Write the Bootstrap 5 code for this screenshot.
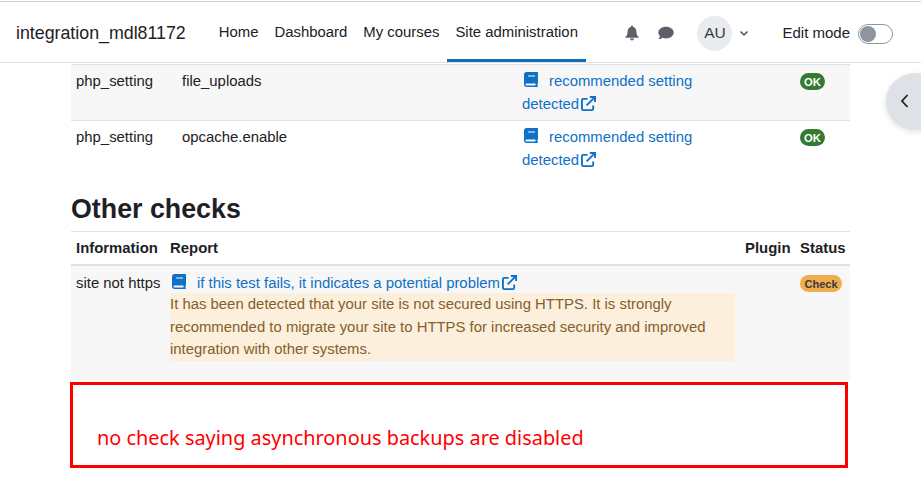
<!DOCTYPE html>
<html lang="en">
<head>
<meta charset="utf-8">
<title>Checks</title>
<link href="https://cdn.jsdelivr.net/npm/bootstrap@5.3.0/dist/css/bootstrap.min.css" rel="stylesheet">
<style>
html,body{height:478px;overflow:hidden;background:#fff}
body{font-family:"Liberation Sans",Arial,sans-serif;font-size:15px;line-height:22.5px;color:#1d2125;position:relative}
.topbar{height:62px;margin-top:1px;border-top:1px solid #d0d0d0;border-bottom:1px solid #dee2e6;padding:0 28px 0 16px;background:#fff}
.brandname{font-size:17.8px;color:#1d2125;margin-right:25px;line-height:28px;position:relative;top:1px}
.menuitem{color:#1d2125;padding:3px 8px 0;height:60px;display:flex;align-items:center;text-decoration:none;border-bottom:3px solid transparent;font-size:14.9px}
.menuitem.here{border-bottom-color:#0f6cbf}
.rightgroup{padding-top:2px}
.iconbtn{color:#5c6167;display:flex}
.avatar{width:35px;height:35px;border-radius:50%;background:#e9ecef;color:#343a40;font-size:15.5px}
.editlabel{color:#1d2125}
.togglebox{width:35px;height:20px;border:1px solid #8f959e;border-radius:10px;padding:1px;background:#fff;margin-top:2px}
.toggleknob{width:16px;height:16px;border-radius:50%;background:#8f959e}
.pagebody{padding:1px 0 0 71px;width:850px}
.chktable{border-collapse:collapse;table-layout:fixed;width:779px;margin:0;font-size:14.9px}
.chktable td,.chktable th{padding:5px;vertical-align:top}
.chktable tr.shade td{background:#f7f7f7}
.t1 td{border-top:1px solid #dee2e6;height:56px}
.heading2{font-size:26.8px;font-weight:700;line-height:32px;margin:16px 0 6px;color:#1d2125}
.chktable.t2 th{border-top:1px solid #dee2e6;border-bottom:2px solid #dee2e6;height:34px;font-weight:700;padding:5px 5px 4px;font-size:14.9px}
.t2 td{height:116px;padding-top:6px}
.oneline{white-space:nowrap}
.doclink{color:#1070c6;text-decoration:none}
.bookic{display:inline-block;vertical-align:-1px;margin:0 11px 0 2px}
.extic{display:inline-block;vertical-align:-2px;margin-left:2px}
.okpill,.checkpill{display:inline-block;border-radius:9px;font-weight:700;line-height:12px;vertical-align:top}
.okpill{background:#357a32;color:#fff;padding:2.5px 4px;margin-top:3px;font-size:11.25px}
.checkpill{background:#f0ad4e;color:#343a40;padding:2.5px 4.5px;margin-top:3px;font-size:11px}
.warnbox{background:#fcefdc;color:#835f2e;width:565px;margin-top:-1.5px;padding-bottom:.5px}
.notebox{border:3px solid #f00;margin:1px 0 0 -1px;width:778px;height:86px;padding:39px 0 0 24px;color:#f00;font-family:"Noto Sans",sans-serif;font-size:19.9px;line-height:28px}
.drawerbtn{position:absolute;left:886px;top:73px;width:60px;height:57px;border-radius:50%;background:#dee2e6;box-shadow:0 2px 6px rgba(0,0,0,.12)}
.drawerbtn svg{position:absolute;left:14px;top:21px}
</style>
</head>
<body>
<nav class="topbar d-flex align-items-center">
  <span class="brandname">integration_mdl81172</span>
  <a class="menuitem" href="#">Home</a>
  <a class="menuitem" href="#">Dashboard</a>
  <a class="menuitem" href="#">My courses</a>
  <a class="menuitem here" href="#">Site administration</a>
  <div class="rightgroup ms-auto d-flex align-items-center">
    <span class="iconbtn" style="margin-right:19px"><svg width="14" height="16" viewBox="0 0 14 16"><path fill="currentColor" d="M7 0.5c-.6 0-1 .4-1 1v.6C3.800 2.600 2.600 4.400 2.600 6.500c0 3-1 4.300-2 5.300-.4.400-.1 1 .4 1h12c.5 0 .8-.6.400-1-1-1-2-2.300-2-5.300 0-2.100-1.200-3.900-3.400-4.400v-.6c0-.6-.4-1-1-1zM5 13.600c0 1.100.9 2 2 2s2-.9 2-2z"/></svg></span>
    <span class="iconbtn" style="margin-right:23px"><svg width="16" height="14" viewBox="0 0 16 14"><path fill="currentColor" d="M8 .7C3.700.7.300 3.300.300 6.500c0 1.400.6 2.600 1.700 3.600-.3 1.300-1.200 2.400-1.500 3 1.700 0 3.200-.6 4.200-1.300 1 .4 2.100.6 3.300.6 4.300 0 7.700-2.600 7.700-5.900S12.300.7 8 .7z"/></svg></span>
    <span class="avatar d-flex align-items-center justify-content-center">AU</span>
    <svg width="10" height="7" viewBox="0 0 10 7" style="margin:0 33px 0 7px"><path d="M1.500 1.500L5 5l3.500-3.500" fill="none" stroke="#343a40" stroke-width="1.200"/></svg>
    <span class="editlabel me-2">Edit mode</span>
    <span class="togglebox d-block"><span class="toggleknob d-block"></span></span>
  </div>
</nav>
<main class="pagebody">
  <table class="chktable t1">
    <colgroup><col style="width:106px"><col style="width:340px"><col style="width:182px"><col style="width:96px"><col style="width:55px"></colgroup>
    <tr class="shade">
      <td>php_setting</td><td>file_uploads</td>
      <td><a class="doclink" href="#"><svg class="bookic" width="14" height="15" viewBox="0 0 14 15"><path fill="currentColor" d="M2.500 0H13c.6 0 1 .4 1 1v10c0 .4-.2.700-.5.800v1.900c.3.200.5.500.5.800 0 .3-.3.500-.6.500H2.500C1.100 15 0 13.900 0 12.500v-10C0 1.100 1.100 0 2.500 0zM4 3.500v1h7v-1zM2.500 11.500c-.6 0-1 .4-1 1s.4 1 1 1h9v-2z"/></svg>recommended setting detected<svg class="extic" width="15" height="15" viewBox="0 0 16 16"><path fill="none" stroke="currentColor" stroke-width="2" d="M7 3H2.500C1.700 3 1 3.700 1 4.500v9c0 .8.700 1.500 1.500 1.500h9c.8 0 1.500-.7 1.500-1.500V10M6 10L14 2M9.500 1H15v5.500"/></svg></a></td>
      <td></td>
      <td><span class="okpill">OK</span></td>
    </tr>
    <tr>
      <td>php_setting</td><td>opcache.enable</td>
      <td><a class="doclink" href="#"><svg class="bookic" width="14" height="15" viewBox="0 0 14 15"><path fill="currentColor" d="M2.500 0H13c.6 0 1 .4 1 1v10c0 .4-.2.700-.5.800v1.900c.3.200.5.500.5.800 0 .3-.3.500-.6.500H2.500C1.100 15 0 13.900 0 12.500v-10C0 1.100 1.100 0 2.500 0zM4 3.500v1h7v-1zM2.500 11.500c-.6 0-1 .4-1 1s.4 1 1 1h9v-2z"/></svg>recommended setting detected<svg class="extic" width="15" height="15" viewBox="0 0 16 16"><path fill="none" stroke="currentColor" stroke-width="2" d="M7 3H2.500C1.700 3 1 3.700 1 4.500v9c0 .8.700 1.500 1.500 1.500h9c.8 0 1.500-.7 1.500-1.500V10M6 10L14 2M9.500 1H15v5.500"/></svg></a></td>
      <td></td>
      <td><span class="okpill">OK</span></td>
    </tr>
  </table>
  <h2 class="heading2">Other checks</h2>
  <table class="chktable t2">
    <colgroup><col style="width:94px"><col style="width:575px"><col style="width:55px"><col style="width:55px"></colgroup>
    <tr><th>Information</th><th>Report</th><th>Plugin</th><th>Status</th></tr>
    <tr class="shade">
      <td class="oneline">site not https</td>
      <td><a class="doclink" href="#"><svg class="bookic" width="14" height="15" viewBox="0 0 14 15"><path fill="currentColor" d="M2.500 0H13c.6 0 1 .4 1 1v10c0 .4-.2.700-.5.800v1.900c.3.200.5.500.5.800 0 .3-.3.500-.6.500H2.500C1.100 15 0 13.900 0 12.500v-10C0 1.100 1.100 0 2.500 0zM4 3.500v1h7v-1zM2.500 11.500c-.6 0-1 .4-1 1s.4 1 1 1h9v-2z"/></svg>if this test fails, it indicates a potential problem<svg class="extic" width="15" height="15" viewBox="0 0 16 16"><path fill="none" stroke="currentColor" stroke-width="2" d="M7 3H2.500C1.700 3 1 3.700 1 4.500v9c0 .8.700 1.500 1.500 1.500h9c.8 0 1.500-.7 1.500-1.500V10M6 10L14 2M9.500 1H15v5.500"/></svg></a>
        <div class="warnbox">It has been detected that your site is not secured using HTTPS. It is strongly recommended to migrate your site to HTTPS for increased security and improved integration with other systems.</div></td>
      <td></td>
      <td><span class="checkpill">Check</span></td>
    </tr>
  </table>
  <div class="notebox">no check saying asynchronous backups are disabled</div>
</main>
<div class="drawerbtn"><svg width="10" height="14" viewBox="0 0 10 14"><path d="M7.500 1L2 7l5.500 6" fill="none" stroke="#1d2125" stroke-width="1.800"/></svg></div>
<script src="https://cdn.jsdelivr.net/npm/bootstrap@5.3.0/dist/js/bootstrap.bundle.min.js"></script>
</body>
</html>
